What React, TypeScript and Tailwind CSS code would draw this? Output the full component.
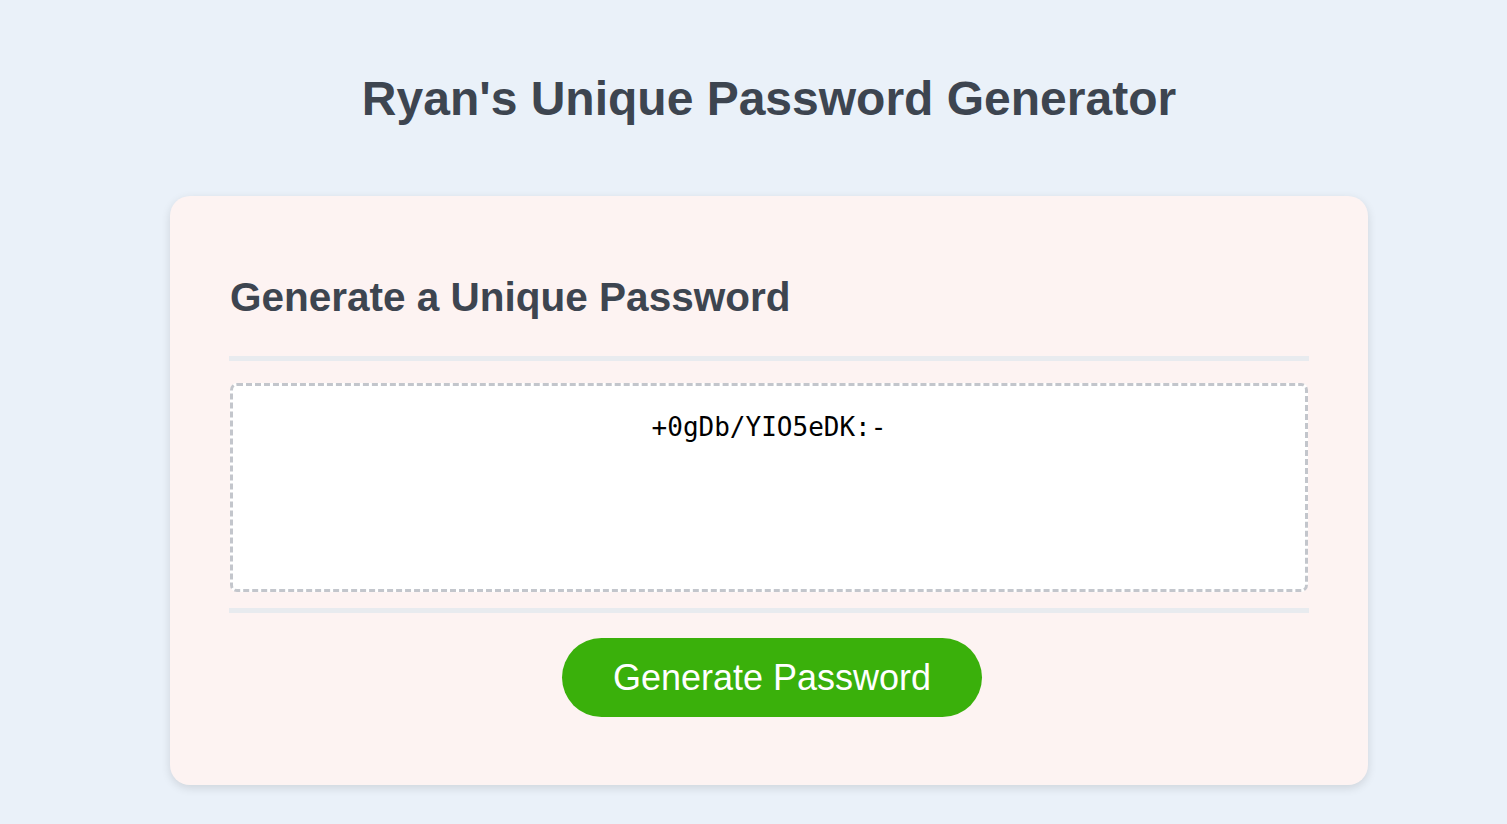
import { useState } from 'react'

const CHARS = 'abcdefghijklmnopqrstuvwxyzABCDEFGHIJKLMNOPQRSTUVWXYZ0123456789!@#$%^&*()-+=/:;?'

export default function App() {
  const [password, setPassword] = useState('+0gDb/YIO5eDK:-')

  const generate = () => {
    let out = ''
    for (let i = 0; i < 15; i++) out += CHARS[Math.floor(Math.random() * CHARS.length)]
    setPassword(out)
  }

  return (
    <div className="min-h-screen bg-[#eaf1f9] font-['Liberation_Sans',Arial,sans-serif] text-[#3d4550]">
      <div className="ml-[170px] w-[1198px] pt-[70px]">
        <h1 className="text-center text-[48px] font-bold leading-[58px]">Ryan's Unique Password Generator</h1>

        <div className="mt-[68px] rounded-[20px] bg-[#fdf3f2] px-[59px] pt-[78px] pb-[68px] shadow-[0_3px_10px_rgba(0,0,0,0.12)]">
          <h2 className="pl-px text-[40.5px] font-bold leading-[46px]">Generate a Unique Password</h2>

          <div className="mt-[36px] h-[5px] bg-[#e8ebef]" />

          <textarea
            readOnly
            value={password}
            className="mx-px mt-[22px] block h-[209px] w-[calc(100%-2px)] resize-none rounded-[7px] border-[3px] border-dashed border-[#c3c6cc] bg-white pt-[25px] text-center font-['DejaVu_Sans_Mono',monospace] text-[26px] leading-[32px] text-black outline-none"
          />

          <div className="mt-[16px] h-[5px] bg-[#e8ebef]" />

          <div className="mt-[25px] flex justify-center pl-[6px]">
            <button
              onClick={generate}
              className="h-[79px] w-[420px] rounded-full bg-[#3ab00b] text-[36px] text-white"
            >
              Generate Password
            </button>
          </div>
        </div>
      </div>
    </div>
  )
}
